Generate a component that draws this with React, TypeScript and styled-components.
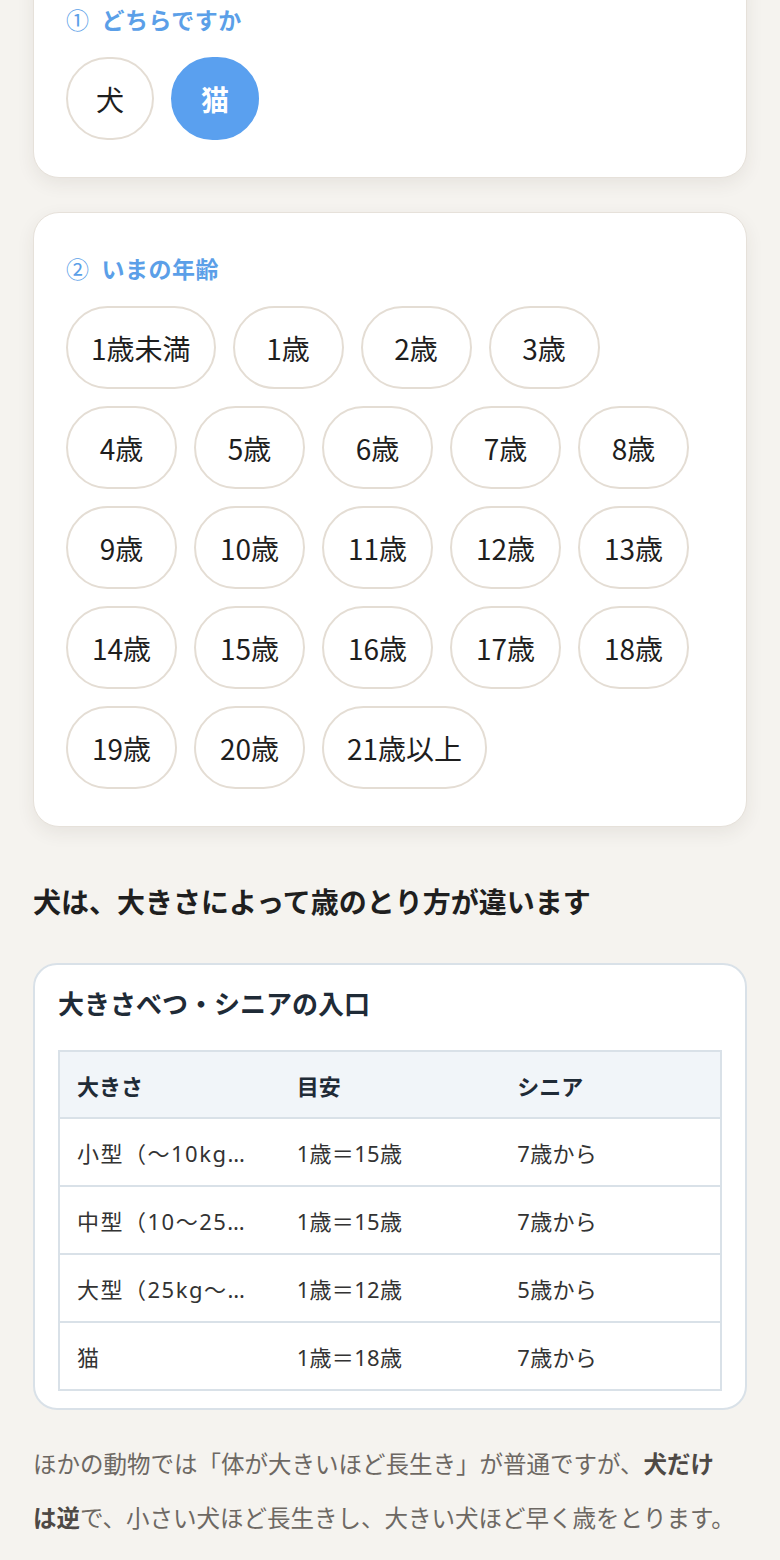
import React from "react";
import styled, { createGlobalStyle } from "styled-components";

const GlobalStyle = createGlobalStyle`
  html, body {
    margin: 0;
    padding: 0;
    background: #f5f3ef;
  }
  body {
    font-family: "Noto Sans CJK JP", "Noto Sans", sans-serif;
    color: #222;
  }
  * { box-sizing: border-box; }
`;

const Page = styled.main`
  margin-top: -37px;
  padding: 0 33px 40px;
  display: flex;
  flex-direction: column;
`;

const Card = styled.section<{ $gap?: number }>`
  background: #fff;
  border: 1px solid #e6e1da;
  border-radius: 26px;
  box-shadow: 0 6px 18px rgba(60, 50, 40, 0.08);
  padding: 41px 32px 37px;
  margin-bottom: ${(p) => p.$gap ?? 0}px;
`;

const StepLabel = styled.h3`
  margin: 0 0 24px;
  font-size: 23px;
  line-height: 28px;
  letter-spacing: 0.5px;
  font-weight: 700;
  color: #5b9fe8;
  display: flex;
  gap: 12px;
  align-items: center;
`;

const Num = styled.span`
  font-weight: 400;
`;

const ChipRow = styled.div`
  display: flex;
  flex-wrap: wrap;
  gap: 17px;
`;

const Chip = styled.button<{ $active?: boolean; $min: number }>`
  font-family: inherit;
  min-width: ${(p) => p.$min}px;
  height: 83px;
  padding: 0 23px;
  border-radius: 42px;
  border: 2px solid ${(p) => (p.$active ? "#5aa0ef" : "#e4ddd4")};
  background: ${(p) => (p.$active ? "#5aa0ef" : "#fff")};
  color: ${(p) => (p.$active ? "#fff" : "#1e1e1e")};
  font-size: 28px;
  font-weight: ${(p) => (p.$active ? 700 : 400)};
  display: flex;
  align-items: center;
  justify-content: center;
  cursor: pointer;
`;

const Heading = styled.h2`
  margin: 54px 0 42px;
  font-size: 28px;
  line-height: 40px;
  font-weight: 700;
  color: #1f1f1f;
`;

const TableCard = styled.section`
  background: #fff;
  border: 2px solid #d9e1e8;
  border-radius: 24px;
  padding: 20px 23px 17px;
`;

const TableTitle = styled.h3`
  margin: 0 0 29px;
  font-size: 26px;
  line-height: 36px;
  font-weight: 700;
  color: #1f2b37;
`;

const Table = styled.table`
  width: 100%;
  table-layout: fixed;
  border-collapse: collapse;
  border: 2px solid #d9e1e8;
`;

const Th = styled.th`
  background: #f1f5f9;
  height: 67px;
  padding: 0 17px;
  text-align: left;
  font-size: 22px;
  font-weight: 700;
  color: #1f2b37;
  border: 2px solid #d9e1e8;
  border-left: none;
  border-right: none;
`;

const Td = styled.td<{ $first?: boolean }>`
  height: 68px;
  padding: 0 ${(p) => (p.$first ? 34 : 17)}px 0 17px;
  font-family: "Noto Sans", "Noto Sans CJK JP", sans-serif;
  font-size: 22px;
  letter-spacing: ${(p) => (p.$first ? 1.5 : 0.3)}px;
  color: #333;
  white-space: nowrap;
  overflow: hidden;
  text-overflow: ellipsis;
  border-top: 2px solid #d9e1e8;
`;

const Paragraph = styled.p`
  margin: 26px 0 0;
  font-size: 23.5px;
  line-height: 54px;
  color: #6d6863;
`;

const Strong = styled.strong`
  font-weight: 700;
  color: #4e4945;
`;

const ages = [
  "1歳未満",
  ...Array.from({ length: 20 }, (_, i) => `${i + 1}歳`),
  "21歳以上",
];

const rows: [string, string, string][] = [
  ["小型（〜10kg）", "1歳＝15歳", "7歳から"],
  ["中型（10〜25kg）", "1歳＝15歳", "7歳から"],
  ["大型（25kg〜）", "1歳＝12歳", "5歳から"],
  ["猫", "1歳＝18歳", "7歳から"],
];

export default function App() {
  return (
    <>
      <GlobalStyle />
      <Page lang="ja">
        <Card $gap={34}>
          <StepLabel>
            <Num>①</Num>どちらですか
          </StepLabel>
          <ChipRow>
            <Chip $min={88}>犬</Chip>
            <Chip $min={88} $active>
              猫
            </Chip>
          </ChipRow>
        </Card>
        <Card>
          <StepLabel>
            <Num>②</Num>いまの年齢
          </StepLabel>
          <ChipRow>
            {ages.map((a) => (
              <Chip key={a} $min={111}>
                {a}
              </Chip>
            ))}
          </ChipRow>
        </Card>
        <Heading>犬は、大きさによって歳のとり方が違います</Heading>
        <TableCard>
          <TableTitle>大きさべつ・シニアの入口</TableTitle>
          <Table>
            <thead>
              <tr>
                <Th>大きさ</Th>
                <Th>目安</Th>
                <Th>シニア</Th>
              </tr>
            </thead>
            <tbody>
              {rows.map((r) => (
                <tr key={r[0]}>
                  {r.map((c, i) => (
                    <Td key={i} $first={i === 0}>
                      {c}
                    </Td>
                  ))}
                </tr>
              ))}
            </tbody>
          </Table>
        </TableCard>
        <Paragraph>
          ほかの動物では「体が大きいほど長生き」が普通ですが、
          <Strong>
            犬だけ
            <br />
            は逆
          </Strong>
          で、小さい犬ほど長生きし、大きい犬ほど早く歳をとります。この表の「うちの子はおいくつ？」でも、大きさを選ぶと結果が変わります。
        </Paragraph>
      </Page>
    </>
  );
}
